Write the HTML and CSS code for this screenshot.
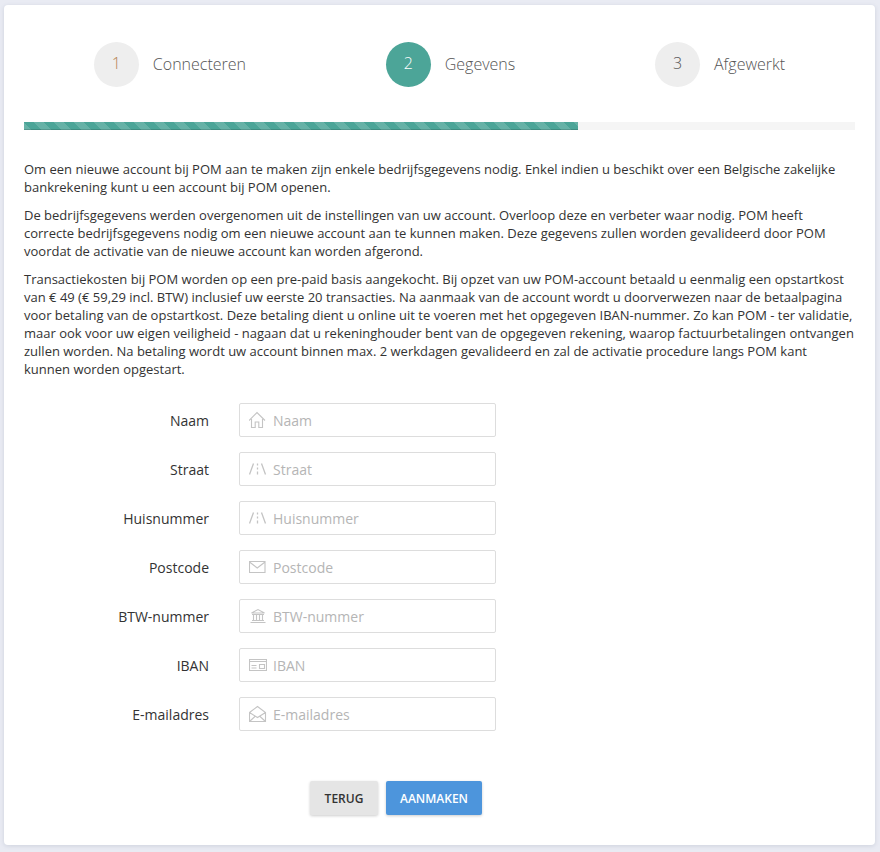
FILE: index.html
```html
<!DOCTYPE html>
<html lang="nl">
<head>
<meta charset="utf-8">
<title>POM account</title>
<link rel="stylesheet" href="styles.css">
</head>
<body>
<main class="card">
  <ol class="steps">
    <li class="step step-done"><span class="step-num">1</span><span class="step-label">Connecteren</span></li>
    <li class="step step-active"><span class="step-num">2</span><span class="step-label">Gegevens</span></li>
    <li class="step"><span class="step-num">3</span><span class="step-label">Afgewerkt</span></li>
  </ol>
  <div class="progress"><div class="progress-fill"></div></div>
  <div class="intro">
    <p>Om een nieuwe account bij POM aan te maken zijn enkele bedrijfsgegevens nodig. Enkel indien u beschikt over een Belgische zakelijke bankrekening kunt u een account bij POM openen.</p>
    <p>De bedrijfsgegevens werden overgenomen uit de instellingen van uw account. Overloop deze en verbeter waar nodig. POM heeft correcte bedrijfsgegevens nodig om een nieuwe account aan te kunnen maken. Deze gegevens zullen worden gevalideerd door POM voordat de activatie van de nieuwe account kan worden afgerond.</p>
    <p>Transactiekosten bij POM worden op een pre-paid basis aangekocht. Bij opzet van uw POM-account betaald u eenmalig een opstartkost van € 49 (€ 59,29 incl. BTW) inclusief uw eerste 20 transacties. Na aanmaak van de account wordt u doorverwezen naar de betaalpagina voor betaling van de opstartkost. Deze betaling dient u online uit te voeren met het opgegeven IBAN-nummer. Zo kan POM - ter validatie, maar ook voor uw eigen veiligheid - nagaan dat u rekeninghouder bent van de opgegeven rekening, waarop factuurbetalingen ontvangen zullen worden. Na betaling wordt uw account binnen max. 2 werkdagen gevalideerd en zal de activatie procedure langs POM kant kunnen worden opgestart.</p>
  </div>
  <form class="form">
    <label class="row"><span class="row-label">Naam</span>
      <span class="field">
        <svg class="icon" viewBox="0 0 18 18"><path d="M0 9.500 8 1.500l8 8M2.500 8v8.500h3.700v-5.500h3.600v5.500h3.700V8"/></svg>
        <input class="input" type="text" placeholder="Naam">
      </span></label>
    <label class="row"><span class="row-label">Straat</span>
      <span class="field">
        <svg class="icon icon-road" viewBox="0 0 18 18"><path d="M4.500 3.500 .5 14.500M12.500 3.500l4 11M8.500 3.500v2M8.500 7.500v2M8.500 11.500v3"/></svg>
        <input class="input" type="text" placeholder="Straat">
      </span></label>
    <label class="row"><span class="row-label">Huisnummer</span>
      <span class="field">
        <svg class="icon icon-road" viewBox="0 0 18 18"><path d="M4.500 3.500 .5 14.500M12.500 3.500l4 11M8.500 3.500v2M8.500 7.500v2M8.500 11.500v3"/></svg>
        <input class="input" type="text" placeholder="Huisnummer">
      </span></label>
    <label class="row"><span class="row-label">Postcode</span>
      <span class="field">
        <svg class="icon" viewBox="0 0 18 18"><path d="M.5 3.500h15.500v11H.5zM.5 4l7.750 6L16 4"/></svg>
        <input class="input" type="text" placeholder="Postcode">
      </span></label>
    <label class="row"><span class="row-label">BTW-nummer</span>
      <span class="field">
        <svg class="icon" viewBox="0 0 18 18"><path d="M2.500 6 9 2.500 15.500 6zM3 7.500h12M4.500 8v5M7.500 8v5M10.500 8v5M13.500 8v5M3 13.500h12M1.500 15.500h15"/></svg>
        <input class="input" type="text" placeholder="BTW-nummer">
      </span></label>
    <label class="row"><span class="row-label">IBAN</span>
      <span class="field">
        <svg class="icon" viewBox="0 0 18 18"><path d="M.5 3.500h17v11H.5zM.5 5.500h17M2.500 9.500h5M2.500 12h5M10.500 8.500h5v4h-5z"/></svg>
        <input class="input" type="text" placeholder="IBAN">
      </span></label>
    <label class="row"><span class="row-label">E-mailadres</span>
      <span class="field">
        <svg class="icon" viewBox="0 0 18 18"><path d="M.5 7.500 8.500 1.500l8 6v9H.5zM.5 7.500l8 5 8-5M.5 16.500 6.500 11M16.500 16.500 10.500 11"/></svg>
        <input class="input" type="text" placeholder="E-mailadres">
      </span></label>
    <div class="actions">
      <button class="btn btn-back" type="button">TERUG</button>
      <button class="btn btn-primary" type="button">AANMAKEN</button>
    </div>
  </form>
</main>
</body>
</html>
```
FILE: styles.css
```css
* { box-sizing: border-box; }
html, body { height: 100%; }
body {
  margin: 0;
  padding: 5px 5px 7px 4px;
  background: #e9ebf3;
  font-family: "Open Sans", sans-serif;
  color: #333;
}
.card {
  height: 840px;
  background: #fff;
  border-radius: 4px;
  padding: 37px 20px 0;
  box-shadow: 0 1px 4px rgba(90, 100, 130, .18);
}
.steps {
  list-style: none;
  margin: 0;
  padding: 0;
  display: flex;
  justify-content: space-around;
}
.step { display: flex; align-items: center; gap: 14px; }
.step-num {
  width: 45px;
  height: 45px;
  border-radius: 50%;
  background: #eee;
  display: flex;
  align-items: center;
  justify-content: center;
  font-size: 16px;
  line-height: 43px;
  padding-bottom: 2px;
  font-weight: 300;
  color: #555;
}
.step-label { font-size: 16px; font-weight: 300; color: #555; padding-bottom: 2px; }
.step-done .step-num { color: #b5824f; }
.step-active .step-num { background: #4ca598; color: #fff; }
.progress {
  margin-top: 35px;
  height: 8px;
  background: #f5f5f5;
}
.progress-fill {
  width: 554px;
  height: 8px;
  background-color: #4ca598;
  background-image: linear-gradient(45deg, rgba(255,255,255,.15) 25%, transparent 25%, transparent 50%, rgba(255,255,255,.15) 50%, rgba(255,255,255,.15) 75%, transparent 75%);
  background-size: 20px 20px;
  background-position: 10px 0;
  box-shadow: inset 0 -1px 0 rgba(0,0,0,.15);
}
.intro { margin-top: 30px; font-size: 13px; line-height: 18px; color: #333; }
.intro p { margin: 0 0 10px; }
.form { margin-top: 25px; }
.row {
  display: flex;
  align-items: center;
  gap: 30px;
  margin-bottom: 15px;
}
.row-label { width: 185px; text-align: right; font-size: 14px; color: #333; }
.field {
  width: 257px;
  height: 34px;
  display: flex;
  align-items: center;
  gap: 6px;
  padding-left: 9px;
  border: 1px solid #ddd;
  border-radius: 2px;
  background: #fff;
}
.icon {
  flex: none;
  width: 18px;
  height: 18px;
  fill: none;
  stroke: #c4c4c4;
  stroke-width: 1.1;
}
.icon-road { stroke-width: 1.3; }
.input {
  flex: 1;
  min-width: 0;
  border: 0;
  outline: 0;
  padding: 0;
  font: 14px "Open Sans", sans-serif;
  color: #333;
  background: transparent;
}
.input::placeholder { color: #b5b5b5; opacity: 1; }
.actions {
  margin-top: 50px;
  display: flex;
  justify-content: center;
  gap: 8px;
  padding-right: 87px;
}
.btn {
  height: 34px;
  border: 0;
  border-radius: 2px;
  font: 600 12px "Open Sans", sans-serif;
  box-shadow: 0 1px 3px rgba(0,0,0,.2);
}
.btn-back { width: 68px; background: #e5e5e5; color: #333; }
.btn-primary { width: 96px; background: #4d95dc; color: #fff; }
```
